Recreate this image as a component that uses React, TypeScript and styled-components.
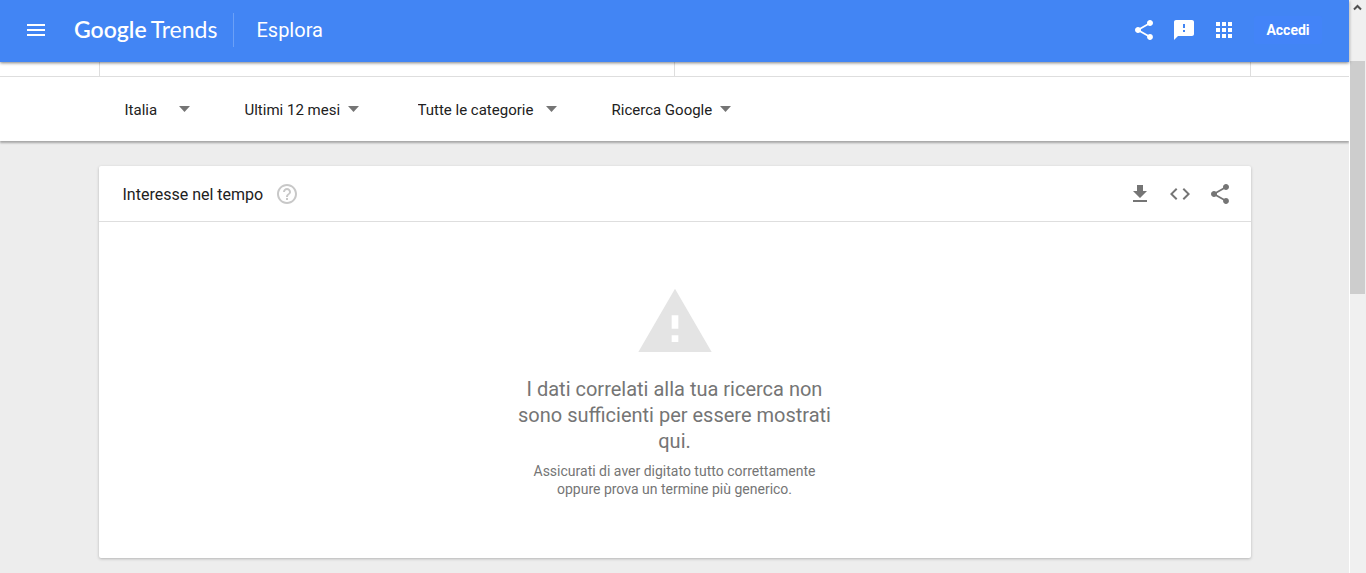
import React from 'react';
import styled, { createGlobalStyle } from 'styled-components';

const GlobalStyle = createGlobalStyle`
  *, *::before, *::after { box-sizing: border-box; }
  body {
    margin: 0;
    background: #ededed;
    font-family: Roboto, "Liberation Sans", sans-serif;
    color: #212121;
  }
`;

const Window = styled.div`
  display: flex;
  min-height: 100vh;
`;

const Page = styled.div`
  flex: 1;
  min-width: 0;
`;

const Header = styled.header`
  position: relative;
  z-index: 1;
  display: flex;
  align-items: center;
  height: 62px;
  padding: 0 27px 2px 24px;
  background: #4285f4;
  color: #fff;
  box-shadow: 0 1px 3px rgba(0, 0, 0, 0.5);
`;

const IconButton = styled.button`
  display: flex;
  padding: 0;
  border: 0;
  background: none;
  color: inherit;
  cursor: pointer;
`;

const Logo = styled.a`
  display: flex;
  gap: 4px;
  margin-left: 26px;
  padding-bottom: 2px;
  color: #fff;
  font-family: Lato, sans-serif;
  font-size: 23px;
  line-height: 28px;
  text-decoration: none;
`;

const LogoStrong = styled.span`
  font-weight: 600;
`;

const Section = styled.h1`
  margin: 0 0 0 16px;
  padding-left: 22px;
  border-left: 1px solid #6ba0f7;
  font-size: 20px;
  line-height: 34px;
  font-weight: 400;
`;

const HeaderActions = styled.div`
  display: flex;
  align-items: center;
  gap: 16px;
  margin-left: auto;
`;

const SignIn = styled.a`
  width: 68px;
  margin-left: 2px;
  border-radius: 2px;
  background: #4384f8;
  color: #fff;
  font-size: 14px;
  line-height: 28px;
  font-weight: 700;
  text-align: center;
  text-decoration: none;
`;

const TermStrip = styled.div`
  padding: 0 24px;
  background: #fff;
  border-bottom: 1px solid #dedede;
`;

const Terms = styled.div`
  display: grid;
  grid-template-columns: 1fr 1fr;
  max-width: 1152px;
  height: 14px;
  margin: 0 auto;
  border-left: 1px solid #dedede;
`;

const Term = styled.div`
  border-right: 1px solid #dedede;
`;

const FilterBar = styled.div`
  padding: 0 24px;
  background: #fff;
  box-shadow: 0 2px 2px rgba(0, 0, 0, 0.3);
`;

const Filters = styled.form`
  display: flex;
  align-items: center;
  max-width: 1152px;
  height: 64px;
  margin: 0 auto;
  padding-left: 26px;
`;

const Filter = styled.label<{ $width: number; $gap: number }>`
  display: flex;
  align-items: center;
  width: ${(p) => p.$width}px;
  margin-right: ${(p) => p.$gap}px;
  color: #757575;
`;

const Select = styled.select`
  flex: 1;
  min-width: 0;
  padding: 2px 0 0;
  border: 0;
  appearance: none;
  background: none;
  color: #212121;
  font: 400 15px/18px Roboto, sans-serif;
  cursor: pointer;
`;

const Main = styled.main`
  padding: 25px 24px 15px;
`;

const Card = styled.section`
  max-width: 1152px;
  margin: 0 auto;
  border-radius: 2px;
  background: #fff;
  box-shadow: 0 1px 3px rgba(0, 0, 0, 0.24);
`;

const CardHeader = styled.div`
  display: flex;
  align-items: center;
  height: 56px;
  padding: 0 19px 0 24px;
  border-bottom: 1px solid #dedede;
  color: #757575;
`;

const CardTitle = styled.h2`
  margin: 0 12px 0 0;
  padding-top: 2px;
  color: #212121;
  font-size: 16px;
  line-height: 24px;
  font-weight: 400;
`;

const HelpButton = styled(IconButton)`
  color: #c8c8c8;
`;

const CardActions = styled.div`
  display: flex;
  gap: 16px;
  margin-left: auto;
`;

const Empty = styled.div`
  display: flex;
  flex-direction: column;
  align-items: center;
  padding: 60px 24px;
  color: #757575;
  text-align: center;
`;

const WarningBox = styled.div`
  display: flex;
  color: #e4e4e4;
`;

const EmptyTitle = styled.p`
  max-width: 330px;
  margin: 14px 0 8px;
  font-size: 20px;
  line-height: 26px;
`;

const EmptyHint = styled.p`
  max-width: 300px;
  margin: 0;
  font-size: 14px;
  line-height: 18px;
`;

const ScrollRail = styled.div`
  display: flex;
  flex-direction: column;
  width: 17px;
  padding-right: 1px;
  border-left: 1px solid #fff;
  background: #f0f0f0;
`;

const ScrollArrow = styled.div`
  display: flex;
  justify-content: center;
  height: 61px;
  padding-top: 4px;
  color: #505050;
`;

const ScrollThumb = styled.div`
  height: 233px;
  background: #cdcdcd;
`;

const paths = {
  menu: 'M3 18h18v-2H3v2zm0-5h18v-2H3v2zm0-7v2h18V6H3z',
  share:
    'M18 16.08c-.76 0-1.44.3-1.96.77L8.91 12.7c.05-.23.09-.46.09-.7s-.04-.47-.09-.7l7.05-4.11c.54.5 1.25.81 2.04.81 1.66 0 3-1.34 3-3s-1.34-3-3-3-3 1.34-3 3c0 .24.04.47.09.7L8.04 9.81C7.5 9.31 6.79 9 6 9c-1.66 0-3 1.34-3 3s1.34 3 3 3c.79 0 1.5-.31 2.04-.81l7.12 4.16c-.05.21-.08.43-.08.65 0 1.61 1.31 2.92 2.92 2.92s2.92-1.31 2.92-2.92-1.31-2.92-2.92-2.92z',
  feedback:
    'M20 2H4c-1.1 0-1.99.9-1.99 2L2 22l4-4h14c1.1 0 2-.9 2-2V4c0-1.1-.9-2-2-2zm-7 12h-2v-2h2v2zm0-4h-2V6h2v4z',
  apps:
    'M4 8h4V4H4v4zm6 12h4v-4h-4v4zm-6 0h4v-4H4v4zm0-6h4v-4H4v4zm6 0h4v-4h-4v4zm6-10v4h4V4h-4zm-6 4h4V4h-4v4zm6 6h4v-4h-4v4zm0 6h4v-4h-4v4z',
  help:
    'M11 18h2v-2h-2v2zm1-16C6.48 2 2 6.48 2 12s4.48 10 10 10 10-4.48 10-10S17.52 2 12 2zm0 18c-4.41 0-8-3.59-8-8s3.59-8 8-8 8 3.59 8 8-3.59 8-8 8zm0-14c-2.21 0-4 1.79-4 4h2c0-1.1.9-2 2-2s2 .9 2 2c0 2-3 1.75-3 5h2c0-2.25 3-2.5 3-5 0-2.21-1.79-4-4-4z',
  download: 'M19 9h-4V3H9v6H5l7 7 7-7zM5 18v2h14v-2H5z',
  code:
    'M9.4 16.6L4.8 12l4.6-4.6L8 6l-6 6 6 6 1.4-1.4zm5.2 0l4.6-4.6-4.6-4.6L16 6l6 6-6 6-1.4-1.4z',
  warning: 'M1 21h22L12 2 1 21zm12-3h-2v-2h2v2zm0-4h-2v-4h2v4z',
};

function Icon({ name, size = 24 }: { name: keyof typeof paths; size?: number }) {
  return (
    <svg width={size} height={size} viewBox="0 0 24 24" fill="currentColor" aria-hidden="true">
      <path d={paths[name]} />
    </svg>
  );
}

const filters = [
  { label: 'Area geografica', value: 'Italia', width: 65, gap: 55 },
  { label: 'Periodo', value: 'Ultimi 12 mesi', width: 114, gap: 59 },
  { label: 'Categoria', value: 'Tutte le categorie', width: 139, gap: 55 },
  { label: 'Tipo di ricerca', value: 'Ricerca Google', width: 119, gap: 0 },
];

export default function App() {
  return (
    <Window>
      <GlobalStyle />
      <Page>
        <Header>
          <IconButton aria-label="Menu">
            <Icon name="menu" />
          </IconButton>
          <Logo href="#">
            <LogoStrong>Google</LogoStrong>
            <span>Trends</span>
          </Logo>
          <Section>Esplora</Section>
          <HeaderActions>
            <IconButton aria-label="Condividi">
              <Icon name="share" />
            </IconButton>
            <IconButton aria-label="Invia feedback">
              <Icon name="feedback" />
            </IconButton>
            <IconButton aria-label="App Google">
              <Icon name="apps" />
            </IconButton>
            <SignIn href="#">Accedi</SignIn>
          </HeaderActions>
        </Header>
        <TermStrip>
          <Terms>
            <Term />
            <Term />
          </Terms>
        </TermStrip>
        <FilterBar>
          <Filters>
            {filters.map((f) => (
              <Filter key={f.label} $width={f.width} $gap={f.gap}>
                <Select aria-label={f.label}>
                  <option>{f.value}</option>
                </Select>
                <svg width="11" height="6" viewBox="0 0 11 6" fill="currentColor" aria-hidden="true">
                  <path d="M0 0h11L5.500 6z" />
                </svg>
              </Filter>
            ))}
          </Filters>
        </FilterBar>
        <Main>
          <Card>
            <CardHeader>
              <CardTitle>Interesse nel tempo</CardTitle>
              <HelpButton aria-label="Guida">
                <Icon name="help" />
              </HelpButton>
              <CardActions>
                <IconButton aria-label="Scarica CSV">
                  <Icon name="download" />
                </IconButton>
                <IconButton aria-label="Incorpora">
                  <Icon name="code" />
                </IconButton>
                <IconButton aria-label="Condividi grafico">
                  <Icon name="share" />
                </IconButton>
              </CardActions>
            </CardHeader>
            <Empty>
              <WarningBox>
                <Icon name="warning" size={80} />
              </WarningBox>
              <EmptyTitle>
                I dati correlati alla tua ricerca non sono sufficienti per essere mostrati qui.
              </EmptyTitle>
              <EmptyHint>
                Assicurati di aver digitato tutto correttamente oppure prova un termine più generico.
              </EmptyHint>
            </Empty>
          </Card>
        </Main>
      </Page>
      <ScrollRail aria-hidden="true">
        <ScrollArrow>
          <svg width="9" height="7" viewBox="0 0 9 7" fill="none" stroke="currentColor" strokeWidth="2">
            <path d="M1 5.500L4.500 2L8 5.500" />
          </svg>
        </ScrollArrow>
        <ScrollThumb />
      </ScrollRail>
    </Window>
  );
}
